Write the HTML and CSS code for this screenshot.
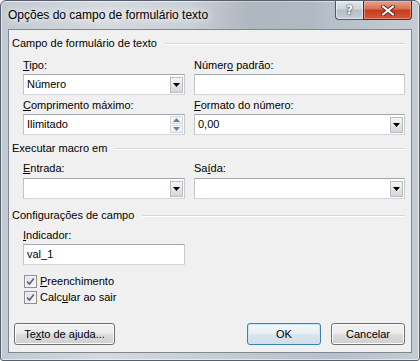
FILE: index.html
```html
<!DOCTYPE html>
<html>
<head>
	<title>Opções do campo de formulário texto</title>
<link rel="stylesheet" href="styles.css">
</head>
<body>
	<div class="window">
		<div class="titlebar">
			<span class="title">Opções do campo de formulário texto</span>
			<div class="caption">
				<span class="cap-btn help">?</span>
				<span class="cap-btn close">
					<svg width="14" height="11" viewBox="0 0 14 11">
						<path d="M2 1.5L12 9.5M12 1.5L2 9.5" stroke="#5a2a20" stroke-width="4" stroke-linecap="round"/>
						<path d="M2 1.5L12 9.5M12 1.5L2 9.5" stroke="#fff" stroke-width="2.2" stroke-linecap="round"/>
					</svg>
				</span>
			</div>
		</div>

		<div class="client">
			<div class="group-head"><span>Campo de formulário de texto</span></div>
			<div class="fields first">
				<div class="field">
					<div class="label"><u>T</u>ipo:</div>
					<div class="box"><span class="value">Número</span><span class="drop"><svg width="7" height="4" viewBox="0 0 7 4"><path d="M0 0h7L3.5 4z" fill="#000"/></svg></span></div>
				</div>
				<div class="field">
					<div class="label">Númer<u>o</u> padrão:</div>
					<div class="box"><span class="value"></span></div>
				</div>
				<div class="field">
					<div class="label"><u>C</u>omprimento máximo:</div>
					<div class="box"><span class="value">Ilimitado</span>
						<span class="spin">
							<span class="spin-btn"><svg width="7" height="4" viewBox="0 0 7 4"><path d="M0 4h7L3.5 0z" fill="#6a7d9a"/></svg></span>
							<span class="spin-btn"><svg width="7" height="4" viewBox="0 0 7 4"><path d="M0 0h7L3.5 4z" fill="#6a7d9a"/></svg></span>
						</span>
					</div>
				</div>
				<div class="field">
					<div class="label"><u>F</u>ormato do número:</div>
					<div class="box"><span class="value">0,00</span><span class="drop"><svg width="7" height="4" viewBox="0 0 7 4"><path d="M0 0h7L3.5 4z" fill="#000"/></svg></span></div>
				</div>
			</div>

			<div class="group-head second"><span>Executar macro em</span></div>
			<div class="fields macro">
				<div class="field">
					<div class="label"><u>E</u>ntrada:</div>
					<div class="box tall"><span class="value"></span><span class="drop"><svg width="7" height="4" viewBox="0 0 7 4"><path d="M0 0h7L3.5 4z" fill="#000"/></svg></span></div>
				</div>
				<div class="field">
					<div class="label">Sa<u>í</u>da:</div>
					<div class="box tall"><span class="value"></span><span class="drop"><svg width="7" height="4" viewBox="0 0 7 4"><path d="M0 0h7L3.5 4z" fill="#000"/></svg></span></div>
				</div>
			</div>

			<div class="group-head third"><span>Configurações de campo</span></div>
			<div class="fields settings">
				<div class="field">
					<div class="label"><u>I</u>ndicador:</div>
					<div class="box plain"><span class="value">val_1</span></div>
				</div>
			</div>

			<div class="checks">
				<div class="check-row">
					<span class="checkbox"><svg width="9" height="9" viewBox="0 0 9 9"><path d="M1.2 4.6L3.5 7L7.8 1.6" stroke="#4c6190" stroke-width="1.6" fill="none"/></svg></span>
					<span><u>P</u>reenchimento</span>
				</div>
				<div class="check-row">
					<span class="checkbox"><svg width="9" height="9" viewBox="0 0 9 9"><path d="M1.2 4.6L3.5 7L7.8 1.6" stroke="#4c6190" stroke-width="1.6" fill="none"/></svg></span>
					<span>Calc<u>u</u>lar ao sair</span>
				</div>
			</div>

			<div class="buttons">
				<button class="btn help-btn">Te<u>x</u>to de ajuda...</button>
				<span class="spacer"></span>
				<button class="btn default">OK</button>
				<button class="btn">Cancelar</button>
			</div>
		</div>
	</div>
</body>
</html>
```

FILE: styles.css
```css
body {
	margin: 0;
	background: #fff;
	font-family: "Liberation Sans", Arial, sans-serif;
	font-size: 11px;
	color: #000;
}

u {
	text-decoration: underline;
	text-underline-offset: 1px;
}

/* window frame */
.window {
	width: 420px;
	height: 361px;
	box-sizing: border-box;
	border: 1px solid #56606c;
	border-radius: 6px 6px 3px 3px;
	padding: 0 7px 7px;
	display: flex;
	flex-direction: column;
	background: linear-gradient(to right, #c2c9d1, #d5dae0 25%, #c4cbd2 55%, #b7c0ca 80%, #c6ccd3);
	box-shadow: inset 0 0 0 1px rgba(255, 255, 255, 0.55);
}

.titlebar {
	height: 28px;
	display: flex;
	justify-content: space-between;
	align-items: flex-start;
	background: linear-gradient(to right, transparent 45%, rgba(90, 100, 112, 0.18) 60%, rgba(90, 100, 112, 0.1) 75%, transparent 80%);
}

.title {
	padding-top: 7px;
	line-height: 15px;
	font-size: 12px;
	text-shadow: 0 0 6px #fff, 0 0 10px #fff;
}

.caption {
	display: flex;
}

.cap-btn {
	height: 18px;
	display: flex;
	align-items: center;
	justify-content: center;
	border: 1px solid #4d5866;
	border-top: none;
}

.help {
	width: 27px;
	border-right: none;
	border-radius: 0 0 0 4px;
	background: linear-gradient(#e3e8ee, #cdd4dc 45%, #b3bdc9 50%, #c6ced7);
	color: #fff;
	font-family: "DejaVu Sans", sans-serif;
	font-weight: bold;
	font-size: 12px;
	text-shadow: 0 0 1px #2c3440, 0 0 2px #2c3440;
	box-shadow: inset 0 0 0 1px rgba(255, 255, 255, 0.5);
}

.close {
	width: 47px;
	border-color: #5e2317;
	border-radius: 0 0 4px 0;
	background: linear-gradient(#e8a08f, #d86f55 45%, #c53b1c 50%, #d35a3b);
	box-shadow: inset 0 0 0 1px rgba(255, 200, 190, 0.45);
}

/* client area */
.client {
	flex: 1;
	display: flex;
	flex-direction: column;
	background: #f0f0f0;
	border: 1px solid #7d8894;
	padding: 6px 6px 7px 0;
}

.group-head {
	display: flex;
	align-items: center;
	height: 15px;
	line-height: 15px;
	padding-left: 3px;
}

.group-head::after {
	content: "";
	flex: 1;
	margin-left: 8px;
	border-top: 1px solid #d5d9de;
	border-bottom: 1px solid #fff;
}

.group-head.second { margin-top: 6px; }
.group-head.third { margin-top: 9px; }

.fields {
	display: grid;
	grid-template-columns: 162px 211px;
	column-gap: 9px;
	row-gap: 3px;
	padding-left: 14px;
}

.fields.first { margin-top: 7px; }
.fields.macro { margin-top: 5px; }
.fields.settings { margin-top: 5px; }

.label {
	line-height: 15px;
	height: 15px;
	margin-bottom: 1px;
}

.macro .label { margin-bottom: 2px; }

.box {
	height: 21px;
	box-sizing: border-box;
	background: #fff;
	border: 1px solid #abadb3;
	border-color: #a3a6ad #c8ccd3 #d2d6dc #c0c3ca;
	display: flex;
	align-items: center;
}

.value {
	flex: 1;
	padding-left: 3px;
	line-height: 15px;
}

.drop {
	width: 13px;
	height: 16px;
	margin-right: 1px;
	box-sizing: border-box;
	border: 1px solid #b9bcc1;
	background: linear-gradient(#f6f6f6, #e6e6e6 50%, #d6d6d6);
	display: flex;
	align-items: center;
	justify-content: center;
}

.spin {
	width: 13px;
	height: 17px;
	margin-right: 1px;
	display: flex;
	flex-direction: column;
	gap: 1px;
}

.spin-btn {
	flex: 1;
	box-sizing: border-box;
	border: 1px solid #d3d7dc;
	background: linear-gradient(#fafafa, #eceef1);
	display: flex;
	align-items: center;
	justify-content: center;
}

/* checkboxes */
.checks {
	margin-top: 9px;
	padding-left: 15px;
	display: flex;
	flex-direction: column;
	gap: 1px;
}

.check-row {
	display: flex;
	align-items: center;
	height: 15px;
	line-height: 15px;
	gap: 3px;
}

.checkbox {
	width: 13px;
	height: 13px;
	box-sizing: border-box;
	border: 1px solid #8e8f8f;
	background: linear-gradient(135deg, #dedede, #fbfbfb);
	box-shadow: inset 0 0 0 1px #f4f4f4;
	display: flex;
	align-items: center;
	justify-content: center;
}

/* bottom buttons */
.buttons {
	margin-top: auto;
	padding-left: 5px;
	display: flex;
	gap: 10px;
}

.spacer {
	flex: 1;
}

.btn {
	height: 22px;
	width: 74px;
	padding: 0;
	font: inherit;
	color: #000;
	border: 1px solid #707070;
	border-radius: 3px;
	background: linear-gradient(#f2f2f2, #ebebeb 50%, #dddddd 51%, #cfcfcf);
	box-shadow: inset 0 0 0 1px #fcfcfc;
}

.btn.help-btn {
	width: 101px;
}

.btn.default {
	border-color: #3c7fb1;
	background: linear-gradient(#f3f7fa, #e8eef3 50%, #dce5ec 51%, #d2dde6);
	box-shadow: inset 0 0 0 1px #c9e6f7;
}
```
